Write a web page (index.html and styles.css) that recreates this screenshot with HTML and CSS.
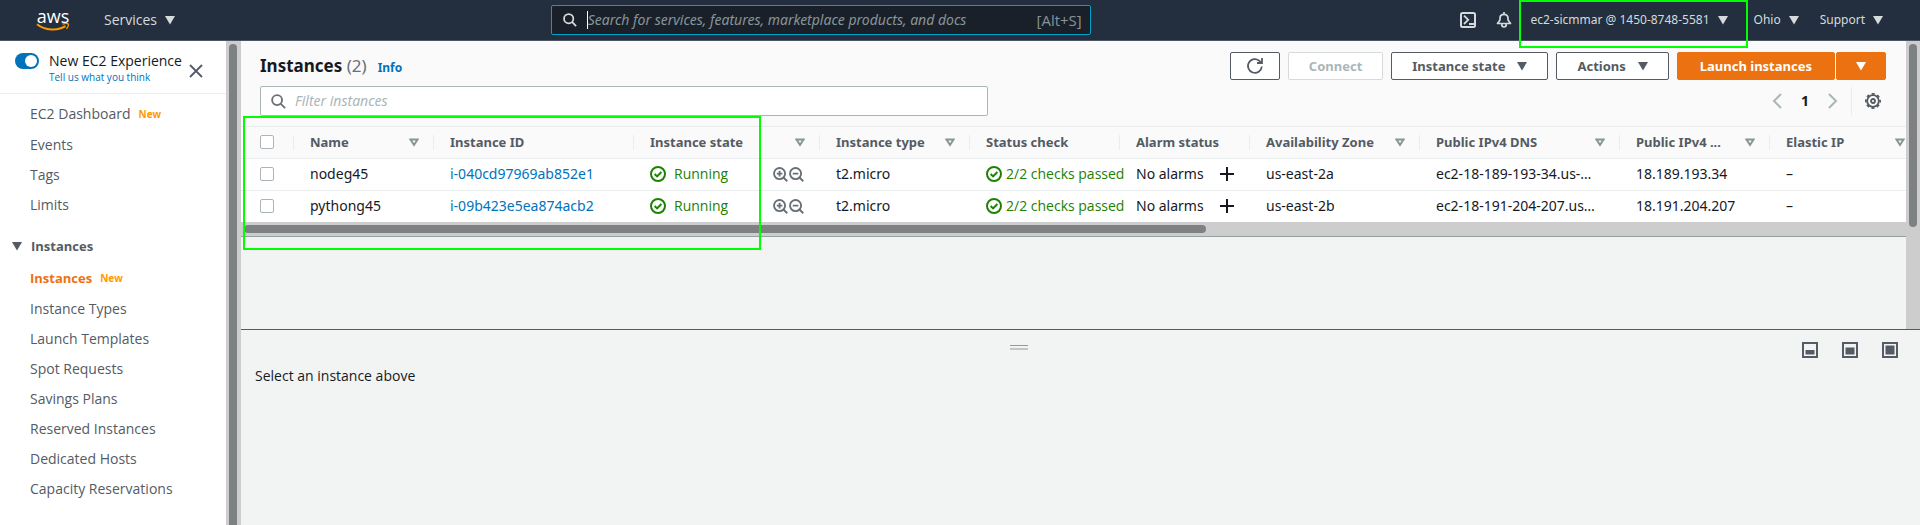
FILE: index.html
```html
<!DOCTYPE html>
<html lang="en">
<head>
<meta charset="utf-8">
<title>Instances | EC2 Management Console</title>
<link rel="stylesheet" href="styles.css">
</head>
<body>
<svg class="sprite" aria-hidden="true">
  <symbol id="search" viewBox="0 0 16 16"><circle cx="6.5" cy="6.5" r="5.3" fill="none" stroke="currentColor" stroke-width="2"/><path d="M10.5 10.5 15 15" stroke="currentColor" stroke-width="2"/></symbol>
  <symbol id="down" viewBox="0 0 10 9"><path d="M0 0h10L5 8.5z" fill="currentColor"/></symbol>
  <symbol id="sort" viewBox="0 0 10 9"><path d="M1.500 1.500h7L5 7z" fill="none" stroke="currentColor" stroke-width="2"/></symbol>
  <symbol id="ok" viewBox="0 0 16 16"><circle cx="8" cy="8" r="7" fill="none" stroke="currentColor" stroke-width="2"/><path d="m4.6 8 2.5 2.4L11.4 6" fill="none" stroke="currentColor" stroke-width="2"/></symbol>
  <symbol id="zoom-in" viewBox="0 0 16 16"><circle cx="7" cy="7" r="5.9" fill="none" stroke="currentColor" stroke-width="2"/><path d="M11.2 11.2 15.2 15.2M7 4v6M4 7h6" stroke="currentColor" stroke-width="2"/></symbol>
  <symbol id="zoom-out" viewBox="0 0 16 16"><circle cx="7" cy="7" r="5.9" fill="none" stroke="currentColor" stroke-width="2"/><path d="M11.2 11.2 15.2 15.2M4 7h6" stroke="currentColor" stroke-width="2"/></symbol>
  <symbol id="plus" viewBox="0 0 14 14"><path d="M7 0v14M0 7h14" stroke="currentColor" stroke-width="2"/></symbol>
</svg>

<header class="topbar">
  <div class="topbar-left">
    <a class="logo" href="#" aria-label="AWS home">
      <span class="logo-word">aws</span>
      <svg class="logo-smile" viewBox="0 0 34 8"><path d="M1 1.2C9 7.6 22 8 29.5 3.2" fill="none" stroke="#f90" stroke-width="2"/><path d="M26.5 1.2c2.500-.8 5-.9 5.700-.3.500.8-.3 3.200-1.700 5" fill="none" stroke="#f90" stroke-width="1.300"/></svg>
    </a>
    <button class="menu services">Services <svg class="arrow"><use href="#down"/></svg></button>
  </div>
  <label class="search">
    <svg class="icon-14"><use href="#search"/></svg>
    <span class="caret"></span>
    <input type="text" aria-label="Search" placeholder="Search for services, features, marketplace products, and docs">
    <kbd>[Alt+S]</kbd>
  </label>
  <div class="topbar-right">
    <button class="icon-button" aria-label="CloudShell"><svg class="icon-16" viewBox="0 0 16 16"><rect x="1" y="1" width="14" height="14" rx="1.500" fill="none" stroke="currentColor" stroke-width="2"/><path d="M4 3.700 8.200 7.800 4 12" fill="none" stroke="currentColor" stroke-width="1.800"/><path d="M9 12h5" stroke="currentColor" stroke-width="2"/></svg></button>
    <button class="icon-button bell" aria-label="Notifications"><svg class="icon-16" viewBox="0 0 16 16"><path d="M1.500 11.500h13L12 8V6c0-2-1.600-3.700-4-3.700S4 4 4 6v2zM8 0v2" fill="none" stroke="currentColor" stroke-width="1.700" stroke-linejoin="round"/><path d="M5.700 12c0 4 4.600 4 4.600 0" fill="none" stroke="currentColor" stroke-width="1.700"/></svg></button>
    <button class="menu account">ec2-sicmmar @ 1450-8748-5581 <svg class="arrow"><use href="#down"/></svg><span class="mark mark-account"></span></button>
    <button class="menu">Ohio <svg class="arrow"><use href="#down"/></svg></button>
    <button class="menu">Support <svg class="arrow"><use href="#down"/></svg></button>
  </div>
</header>

<div class="shell">
  <nav class="sidebar">
    <div class="experience">
      <input class="toggle" type="checkbox" id="experience" checked>
      <div class="experience-text">
        <label for="experience">New EC2 Experience</label>
        <a href="#">Tell us what you think</a>
      </div>
      <button class="icon-button close" aria-label="Close"><svg class="icon-14" viewBox="0 0 14 14"><path d="m1 1 12 12M13 1 1 13" stroke="currentColor" stroke-width="1.800"/></svg></button>
    </div>
    <ul class="links">
      <li><a href="#">EC2 Dashboard</a><span class="new">New</span></li>
      <li><a href="#">Events</a></li>
      <li><a href="#">Tags</a></li>
      <li><a href="#">Limits</a></li>
    </ul>
    <button class="group"><svg class="arrow"><use href="#down"/></svg>Instances</button>
    <ul class="links">
      <li><a class="active" href="#">Instances</a><span class="new">New</span></li>
      <li><a href="#">Instance Types</a></li>
      <li><a href="#">Launch Templates</a></li>
      <li><a href="#">Spot Requests</a></li>
      <li><a href="#">Savings Plans</a></li>
      <li><a href="#">Reserved Instances</a></li>
      <li><a href="#">Dedicated Hosts</a></li>
      <li><a href="#">Capacity Reservations</a></li>
    </ul>
  </nav>
  <div class="track-y"><div class="thumb"></div></div>

  <div class="content">
    <div class="upper">
      <main class="page">
        <div class="bar">
          <h1>Instances <span>(2)</span></h1>
          <a class="info" href="#">Info</a>
          <div class="actions">
            <button class="btn icon-only" aria-label="Refresh"><svg class="icon-16" viewBox="0 0 16 16"><path d="M14.800 8.500A6.900 6.900 0 1 1 13 3.300L14.500 5" fill="none" stroke="currentColor" stroke-width="1.800"/><path d="M15 0v5h-5" fill="none" stroke="currentColor" stroke-width="1.800"/></svg></button>
            <button class="btn" disabled>Connect</button>
            <button class="btn">Instance state <svg class="arrow"><use href="#down"/></svg></button>
            <button class="btn">Actions <svg class="arrow"><use href="#down"/></svg></button>
            <div class="split">
              <button class="btn primary launch">Launch instances</button>
              <button class="btn primary icon-only" aria-label="More launch options"><svg class="arrow"><use href="#down"/></svg></button>
            </div>
          </div>
        </div>
        <div class="bar filter-bar">
          <label class="filter">
            <svg class="icon-15"><use href="#search"/></svg>
            <input type="text" aria-label="Filter instances" placeholder="Filter instances">
          </label>
          <div class="pager">
            <button class="icon-button" aria-label="Previous page"><svg class="chevron" viewBox="0 0 10 16"><path d="M9 1 2 8l7 7" fill="none" stroke="currentColor" stroke-width="2"/></svg></button>
            <button class="icon-button current">1</button>
            <button class="icon-button" aria-label="Next page"><svg class="chevron" viewBox="0 0 10 16"><path d="m1 1 7 7-7 7" fill="none" stroke="currentColor" stroke-width="2"/></svg></button>
            <span class="rule"></span>
            <button class="icon-button gear" aria-label="Preferences"><svg class="icon-16" viewBox="0 0 16 16"><circle cx="8" cy="8" r="5.800" fill="none" stroke="currentColor" stroke-width="1.800"/><circle cx="8" cy="8" r="7.100" fill="none" stroke="currentColor" stroke-width="1.800" stroke-dasharray="3 2.576" stroke-dashoffset="1.500"/><circle cx="8" cy="8" r="2" fill="none" stroke="currentColor" stroke-width="1.800"/></svg></button>
          </div>
        </div>
        <div class="table-wrap">
          <table>
            <colgroup><col class="c-check"><col class="c-name"><col class="c-id"><col class="c-state"><col class="c-m"><col class="c-m"><col class="c-alarm"><col class="c-zone"><col class="c-id"><col class="c-m"><col class="c-m"></colgroup>
            <thead>
              <tr>
                <th><input type="checkbox" aria-label="Select all"></th>
                <th><div>Name<svg class="sort"><use href="#sort"/></svg></div></th>
                <th><div>Instance ID</div></th>
                <th><div>Instance state<svg class="sort"><use href="#sort"/></svg></div></th>
                <th><div>Instance type<svg class="sort"><use href="#sort"/></svg></div></th>
                <th><div>Status check</div></th>
                <th><div>Alarm status</div></th>
                <th><div>Availability Zone<svg class="sort"><use href="#sort"/></svg></div></th>
                <th><div>Public IPv4 DNS<svg class="sort"><use href="#sort"/></svg></div></th>
                <th><div>Public IPv4 ...<svg class="sort"><use href="#sort"/></svg></div></th>
                <th><div>Elastic IP<svg class="sort"><use href="#sort"/></svg></div></th>
              </tr>
            </thead>
            <tbody>
              <tr>
                <td><input type="checkbox" aria-label="Select nodeg45"></td>
                <td>nodeg45</td>
                <td><a href="#">i-040cd97969ab852e1</a></td>
                <td><div class="cell ok state"><svg class="icon-16"><use href="#ok"/></svg>Running<span class="zooms"><svg class="icon-15"><use href="#zoom-in"/></svg><svg class="icon-15"><use href="#zoom-out"/></svg></span></div></td>
                <td>t2.micro</td>
                <td class="status"><div class="cell ok"><svg class="icon-16"><use href="#ok"/></svg>2/2 checks passed</div></td>
                <td><div class="cell">No alarms<svg class="icon-14 plus"><use href="#plus"/></svg></div></td>
                <td>us-east-2a</td>
                <td>ec2-18-189-193-34.us-…</td>
                <td>18.189.193.34</td>
                <td>–</td>
              </tr>
              <tr>
                <td><input type="checkbox" aria-label="Select pythong45"></td>
                <td>pythong45</td>
                <td><a href="#">i-09b423e5ea874acb2</a></td>
                <td><div class="cell ok state"><svg class="icon-16"><use href="#ok"/></svg>Running<span class="zooms"><svg class="icon-15"><use href="#zoom-in"/></svg><svg class="icon-15"><use href="#zoom-out"/></svg></span></div></td>
                <td>t2.micro</td>
                <td class="status"><div class="cell ok"><svg class="icon-16"><use href="#ok"/></svg>2/2 checks passed</div></td>
                <td><div class="cell">No alarms<svg class="icon-14 plus"><use href="#plus"/></svg></div></td>
                <td>us-east-2b</td>
                <td>ec2-18-191-204-207.us…</td>
                <td>18.191.204.207</td>
                <td>–</td>
              </tr>
            </tbody>
          </table>
        </div>
        <div class="track-x"><div class="thumb"></div></div>
        <span class="mark mark-table"></span>
      </main>
      <div class="track-y right"><div class="thumb"></div></div>
    </div>
    <section class="panel">
      <div class="panel-head">
        <div class="grip"></div>
        <div class="panel-sizes">
          <button class="icon-button" aria-label="Small panel"><svg class="icon-16" viewBox="0 0 16 16"><rect x="1" y="1" width="14" height="14" fill="none" stroke="currentColor" stroke-width="2"/><path d="M3.500 8h9v4.500h-9z" fill="currentColor"/></svg></button>
          <button class="icon-button" aria-label="Medium panel"><svg class="icon-16" viewBox="0 0 16 16"><rect x="1" y="1" width="14" height="14" fill="none" stroke="currentColor" stroke-width="2"/><path d="M3.500 5.500h9v7h-9z" fill="currentColor"/></svg></button>
          <button class="icon-button" aria-label="Full panel"><svg class="icon-16" viewBox="0 0 16 16"><rect x="1" y="1" width="14" height="14" fill="none" stroke="currentColor" stroke-width="2"/><path d="M3.500 3.500h9v9h-9z" fill="currentColor"/></svg></button>
        </div>
      </div>
      <p>Select an instance above</p>
    </section>
  </div>
</div>
</body>
</html>
```
FILE: styles.css
```css
* { box-sizing: border-box; }

body {
  margin: 0;
  min-height: 100vh;
  display: flex;
  flex-direction: column;
  font: 14px/20px "Noto Sans", "Open Sans", sans-serif;
  color: #16191f;
  background: #f2f4f3;
}

button, input { font: inherit; color: inherit; }
button { display: inline-flex; align-items: center; border: 0; background: none; padding: 0; white-space: nowrap; }
a { color: #0073bb; text-decoration: none; }
ul { list-style: none; margin: 0; padding: 0; }
svg { flex: none; display: block; }

.sprite { position: absolute; width: 0; height: 0; }
.icon-14 { width: 14px; height: 14px; }
.icon-15 { width: 15px; height: 15px; }
.icon-16 { width: 16px; height: 16px; }
.arrow, .sort { width: 10px; height: 9px; }
.icon-button { justify-content: center; }

.mark { position: absolute; border: 2px solid #0f0; pointer-events: none; z-index: 2; }

/* Top bar */
.topbar {
  display: flex;
  align-items: center;
  justify-content: space-between;
  height: 41px;
  padding: 0 37px 0 36px;
  background: #232f3e;
  border-bottom: 1px solid #4b5563;
  color: #d5dbdb;
}
.topbar-left { display: flex; align-items: center; gap: 34px; padding-right: 6px; }
.logo { display: flex; flex-direction: column; align-items: center; width: 34px; }
.logo-word { color: #fff; font: 18px/14px "Open Sans", sans-serif; }
.logo-smile { width: 34px; height: 8px; }
.menu { gap: 8px; font-size: 12px; }
.services { font: 14px/20px "Open Sans", sans-serif; }
.search {
  display: flex;
  align-items: center;
  width: 540px;
  height: 30px;
  padding: 0 8px 0 11px;
  background: #1a202a;
  border: 1px solid #00a1c9;
  border-radius: 2px;
}
.caret { width: 1px; height: 18px; margin-left: 10px; background: #fff; }
.search input { flex: 1; min-width: 0; border: 0; padding: 0; background: none; outline: 0; }
.search input::placeholder { color: #879596; font-style: italic; opacity: 1; }
.search kbd { font: 15px/20px "Open Sans", sans-serif; color: #879596; }
.topbar-right { display: flex; align-items: center; }
.bell { margin: 0 18px 0 20px; }
.account { position: relative; height: 40px; margin-right: 26px; }
.mark-account { inset: 0 -20px -8px -11px; }
.account + .menu { margin-right: 21px; }

/* Side navigation */
.shell { flex: 1; display: flex; }
.sidebar { width: 226px; flex: none; background: #fff; color: #545b64; font-family: "Open Sans", sans-serif; }
.experience { display: flex; height: 53px; padding: 10px 23px 0 15px; border-bottom: 1px solid #eaeded; }
.toggle { appearance: none; flex: none; width: 24px; height: 16px; margin: 2px 10px 0 0; border-radius: 8px; background: #0073bb; }
.toggle::after { content: ""; display: block; width: 12px; height: 12px; margin: 2px 0 0 10px; border-radius: 50%; background: #fff; }
.experience-text { display: flex; flex-direction: column; flex: 1; }
.experience-text label { color: #16191f; line-height: 20px; white-space: nowrap; }
.experience-text a { font-size: 10px; line-height: 12px; }
.close { align-self: flex-start; margin-top: 13px; color: #545b64; }
.links { padding: 4px 0 0 30px; }
.links li { display: flex; align-items: center; height: 30px; }
.links li:first-child { height: 32px; }
.links a { color: inherit; }
.links .active { color: #ec7211; font-size: 13px; font-weight: 700; }
.new { margin-left: 8px; color: #f90; font-size: 10px; font-weight: 700; }
.group { gap: 9px; height: 30px; margin-top: 11px; padding-left: 12px; font-size: 13px; font-weight: 700; }
.group + .links { padding-top: 1px; }

/* Scroll tracks */
.track-y { flex: none; width: 15px; padding: 3px; background: #cdcdcd; }
.track-y .thumb { width: 8px; height: 100%; border-radius: 4px; background: #7d8181; }
.track-y:not(.right) { padding-bottom: 0; }
.track-y:not(.right) .thumb { border-radius: 4px 4px 0 0; }
.right { width: 14px; }
.right .thumb { height: 65%; }
.track-x { height: 15px; padding: 3px; background: #cdcdcd; border-bottom: 1px solid #95a0a2; }
.track-x .thumb { width: 58%; height: 8px; border-radius: 4px; background: #7d8181; }

/* Page */
.content { flex: 1; min-width: 0; display: flex; flex-direction: column; }
.upper { display: flex; height: 288px; }
.page { position: relative; flex: 1; min-width: 0; }
.bar { display: flex; align-items: center; padding: 11px 20px 0 19px; background: #fafafa; }
h1 { margin: 0; font-size: 17px; line-height: 28px; font-weight: 700; }
h1 span { font-weight: 400; color: #687078; }
.info { margin: 3px 0 0 11px; font-size: 12px; font-weight: 700; }
.actions { display: flex; gap: 8px; margin-left: auto; }
.btn {
  justify-content: center;
  gap: 12px;
  height: 28px;
  padding: 0 20px;
  border: 1px solid #545b64;
  border-radius: 2px;
  background: #fff;
  color: #545b64;
  font-size: 13px;
  font-weight: 700;
}
.btn:disabled { border-color: #d5dbdb; color: #aab7b8; }
.icon-only { width: 50px; padding: 0; }
.primary { background: #ec7211; border-color: #ec7211; color: #fff; }
.launch { padding: 0 22px; }
.split { display: flex; gap: 1px; }

.filter-bar { padding-top: 6px; padding-bottom: 10px; justify-content: space-between; }
.filter {
  display: flex;
  align-items: center;
  gap: 9px;
  width: 728px;
  height: 30px;
  padding: 0 10px;
  border: 1px solid #aab7b8;
  border-radius: 2px;
  background: #fff;
  color: #687078;
}
.filter input { flex: 1; border: 0; padding: 0; background: none; outline: 0; }
.filter input::placeholder { color: #aab7b8; font-style: italic; opacity: 1; }
.pager { display: flex; align-items: center; color: #aab7b8; }
.chevron { width: 10px; height: 16px; }
.current { width: 46px; color: #16191f; font-weight: 700; }
.rule { width: 1px; height: 28px; margin: 0 13px; background: #eaeded; }
.gear { margin-right: 5px; color: #545b64; }

/* Table */
.table-wrap { overflow: hidden; border-top: 1px solid #eaeded; background: #fff; }
table { width: 100%; min-width: 1679px; table-layout: fixed; border-collapse: collapse; }
.c-check { width: 53px; }
.c-name { width: 140px; }
.c-id { width: 200px; }
.c-state { width: 186px; }
.c-m { width: 150px; }
.c-alarm { width: 130px; }
.c-zone { width: 170px; }
tr { height: 32px; border-bottom: 1px solid #eaeded; }
thead tr { height: 31px; background: #fafafa; }
tbody tr:last-child { border-bottom: 0; }
th, td { padding: 0 16px; text-align: left; white-space: nowrap; }
th { padding: 0; color: #545b64; font-size: 13px; }
th div { display: flex; align-items: center; justify-content: space-between; height: 15px; padding: 0 14px 0 16px; border-right: 1px solid #eaeded; }
th:first-child, td:first-child { padding: 0 0 0 19px; }
th:first-child { background: linear-gradient(#eaeded, #eaeded) right center / 1px 15px no-repeat; }
.sort { color: #879596; }
.table-wrap input { appearance: none; display: block; width: 14px; height: 14px; margin: 0; border: 1px solid #aab7b8; border-radius: 2px; background: #fff; }
.cell { display: flex; align-items: center; }
.status { padding-right: 0; }
.ok { gap: 4px; color: #1d8102; font-family: "Open Sans", sans-serif; }
.state { gap: 8px; }
.zooms { display: flex; gap: 1px; margin-left: auto; color: #687078; }
.plus { margin-left: auto; }
.mark-table { left: 2px; top: 75px; width: 518px; height: 134px; }

/* Details panel */
.panel { flex: 1; border-top: 1px solid #545b64; }
.panel-head { display: flex; align-items: center; height: 32px; padding: 2px 22px 0 0; }
.grip { flex: none; width: 18px; height: 5px; margin: 0 auto; border: solid #999; border-width: 1px 0; border-bottom: 2px solid #c4c6c5; }
.panel-sizes { display: flex; gap: 24px; padding: 6px 0 0 6px; color: #545b64; }
.panel p { margin: 4px 14px; font-family: "Open Sans", sans-serif; }
```
